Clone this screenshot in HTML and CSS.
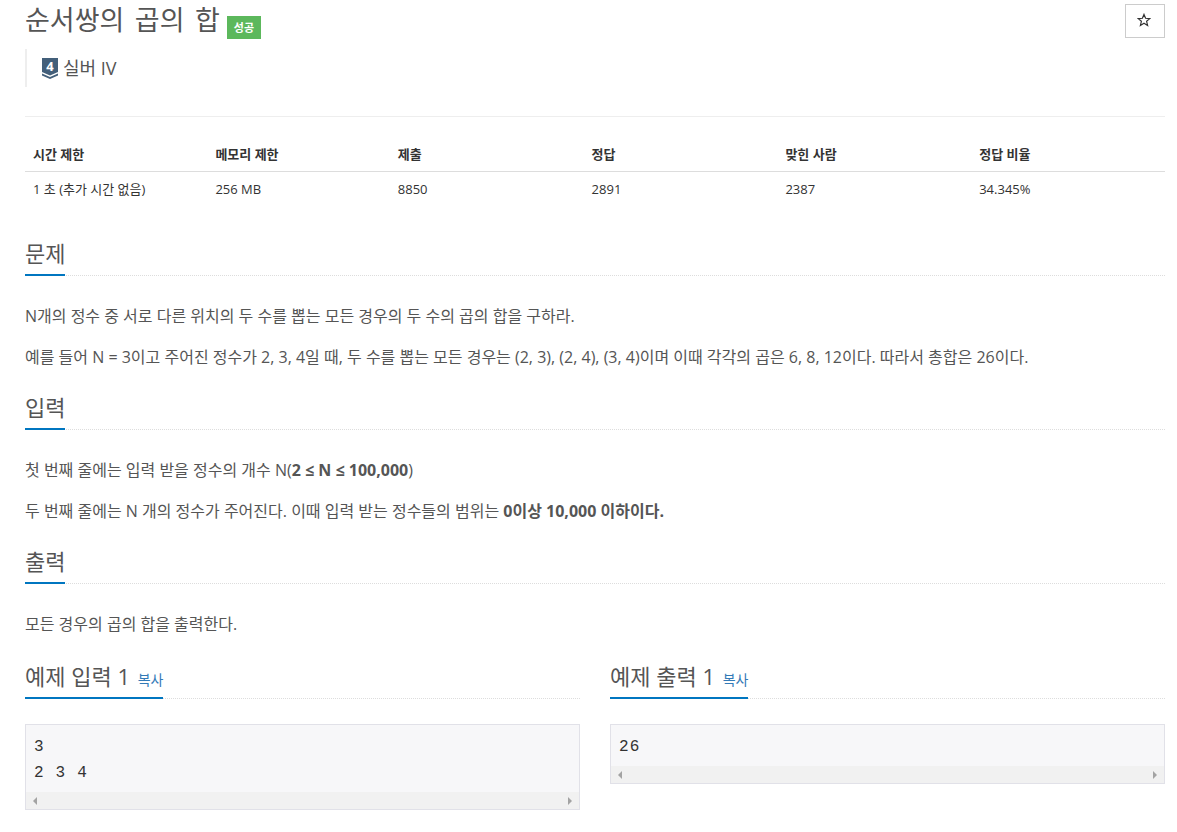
FILE: index.html
```html
<!DOCTYPE html>
<html lang="ko">
<head>
<meta charset="utf-8">
<title>순서쌍의 곱의 합</title>
<link rel="stylesheet" href="styles.css">
</head>
<body>
<main class="page">
  <header class="title-row">
    <div class="title-main">
      <h1 class="title">순서쌍의 곱의 합</h1>
      <span class="badge">성공</span>
    </div>
    <button class="star-btn" type="button" aria-label="즐겨찾기">
      <svg viewBox="0 0 14 14" width="14" height="14"><path d="M7 1.4L8.6 5.3L12.8 5.6L9.6 8.3L10.6 12.4L7 10.2L3.4 12.4L4.4 8.3L1.2 5.6L5.4 5.3Z" fill="none" stroke="#333" stroke-width="1.2" stroke-linejoin="miter"/></svg>
    </button>
  </header>
  <blockquote class="tier">
    <svg class="tier-icon" viewBox="0 0 16 21" width="16" height="21">
      <path d="M0 0H16V14L8 17.5L0 14Z" fill="#435f7a"/>
      <path d="M0 15.5L8 19L16 15.5V17.5L8 21L0 17.5Z" fill="#435f7a"/>
      <text x="8" y="13" class="tier-num">4</text>
    </svg>
    <span>실버 IV</span>
  </blockquote>
  <hr class="rule">
  <table class="info">
    <thead>
      <tr><th>시간 제한</th><th>메모리 제한</th><th>제출</th><th>정답</th><th>맞힌 사람</th><th>정답 비율</th></tr>
    </thead>
    <tbody>
      <tr><td>1 초 (추가 시간 없음)</td><td>256 MB</td><td>8850</td><td>2891</td><td>2387</td><td>34.345%</td></tr>
    </tbody>
  </table>
  <section class="section first">
    <h2 class="head"><span>문제</span></h2>
    <p>N개의 정수 중 서로 다른 위치의 두 수를 뽑는 모든 경우의 두 수의 곱의 합을 구하라.</p>
    <p>예를 들어 N = 3이고 주어진 정수가 2, 3, 4일 때, 두 수를 뽑는 모든 경우는 (2, 3), (2, 4), (3, 4)이며 이때 각각의 곱은 6, 8, 12이다. 따라서 총합은 26이다.</p>
  </section>
  <section class="section">
    <h2 class="head"><span>입력</span></h2>
    <p>첫 번째 줄에는 입력 받을 정수의 개수 N(<strong>2 ≤ N ≤ 100,000</strong>)</p>
    <p>두 번째 줄에는 N 개의 정수가 주어진다. 이때 입력 받는 정수들의 범위는 <strong>0이상 10,000 이하이다.</strong></p>
  </section>
  <section class="section">
    <h2 class="head"><span>출력</span></h2>
    <p>모든 경우의 곱의 합을 출력한다.</p>
  </section>
  <div class="samples">
    <section class="sample">
      <h2 class="head"><span>예제 입력 1 <a class="copy">복사</a></span></h2>
      <div class="code">
        <pre>3
2 3 4</pre>
        <div class="scrollbar"><i class="arrow left"></i><i class="arrow right"></i></div>
      </div>
    </section>
    <section class="sample">
      <h2 class="head"><span>예제 출력 1 <a class="copy">복사</a></span></h2>
      <div class="code">
        <pre>26</pre>
        <div class="scrollbar"><i class="arrow left"></i><i class="arrow right"></i></div>
      </div>
    </section>
  </div>
</main>
</body>
</html>
```
FILE: styles.css
```css
* { box-sizing: border-box; }
html, body { margin: 0; padding: 0; background: #fff; }
body {
  font-family: "Open Sans", "Noto Sans CJK KR", sans-serif;
  font-size: 14px;
  line-height: 20px;
  color: #555;
  height: 832px;
  overflow: hidden;
}
.page { padding: 0 12px 0 25px; width: 1177px; }
.title-row { display: flex; justify-content: space-between; align-items: flex-start; padding-top: 4px; height: 49px; }
.title-main { display: flex; align-items: flex-start; }
.title { margin: -2px 0 0; font-size: 27px; line-height: 36px; font-weight: 400; color: #555; word-spacing: 3.5px; }
.badge {
  margin: 12px 0 0 7px; width: 34px; height: 23px;
  background: #5cb85c; color: #fff; font-size: 11px; font-weight: 700; line-height: 23px; text-align: center;
}
.star-btn {
  width: 40px; height: 34px; padding: 0;
  background: #fff; border: 1px solid #ccc;
  display: flex; align-items: center; justify-content: center;
}
.star-btn svg { display: block; margin: 0 2px 2px 0; }
.tier {
  margin: 0; height: 38px; padding: 0 0 0 15px; border-left: 2px solid #eee;
  display: flex; align-items: center; gap: 5px; font-size: 18px; color: #555;
}
.tier-icon { flex: none; }
.tier-num { font: 700 13px "Open Sans", sans-serif; fill: #fff; text-anchor: middle; }
.rule { height: 1px; margin: 29px 0 20px; border: 0; background: #eee; }
.info { width: 100%; border-collapse: collapse; table-layout: fixed; font-size: 13px; line-height: 18px; color: #333; }
.info th:nth-child(-n+2) { width: 16%; }
.info th { width: 17%; text-align: left; font-weight: 700; padding: 6px 8px; height: 34px; border-bottom: 1px solid #ddd; }
.info td { padding: 8px; height: 36px; }
.section { margin-top: 19px; }
.section.first { margin-top: 31px; }
.head {
  margin: 0 0 25px; border-bottom: 1px dotted #ddd; height: 38px; font-size: 22px; line-height: 28px; font-weight: 400; color: #555;
}
.head > span { display: inline-block; height: 38px; padding-top: 1px; border-bottom: 2px solid #0076c0; }
.section p { margin: 0 0 10px; font-size: 16px; line-height: 31px; height: 31px; }
.section p strong { font-weight: 700; }
.samples { display: grid; grid-template-columns: 555px 555px; column-gap: 30px; margin-top: 21px; }
.copy { font-size: 14px; color: #337ab7; margin-left: 2px; }
.sample .head { margin-bottom: 25px; }
.code { border: 1px solid #e1e1e8; background: #f7f7f9; }
.code pre {
  margin: 0; padding: 9px 8px 6px; font-family: "Liberation Mono", "DejaVu Sans Mono", monospace; font-size: 16px; line-height: 26px; color: #333; letter-spacing: 1.2px;
}
.scrollbar { height: 17px; background: #f1f1f1; display: flex; justify-content: space-between; align-items: center; padding: 0 7px; }
.arrow { width: 0; height: 0; border-top: 4px solid transparent; border-bottom: 4px solid transparent; }
.arrow.left { border-right: 4px solid #a3a3a3; }
.arrow.right { border-left: 4px solid #a3a3a3; }
```
